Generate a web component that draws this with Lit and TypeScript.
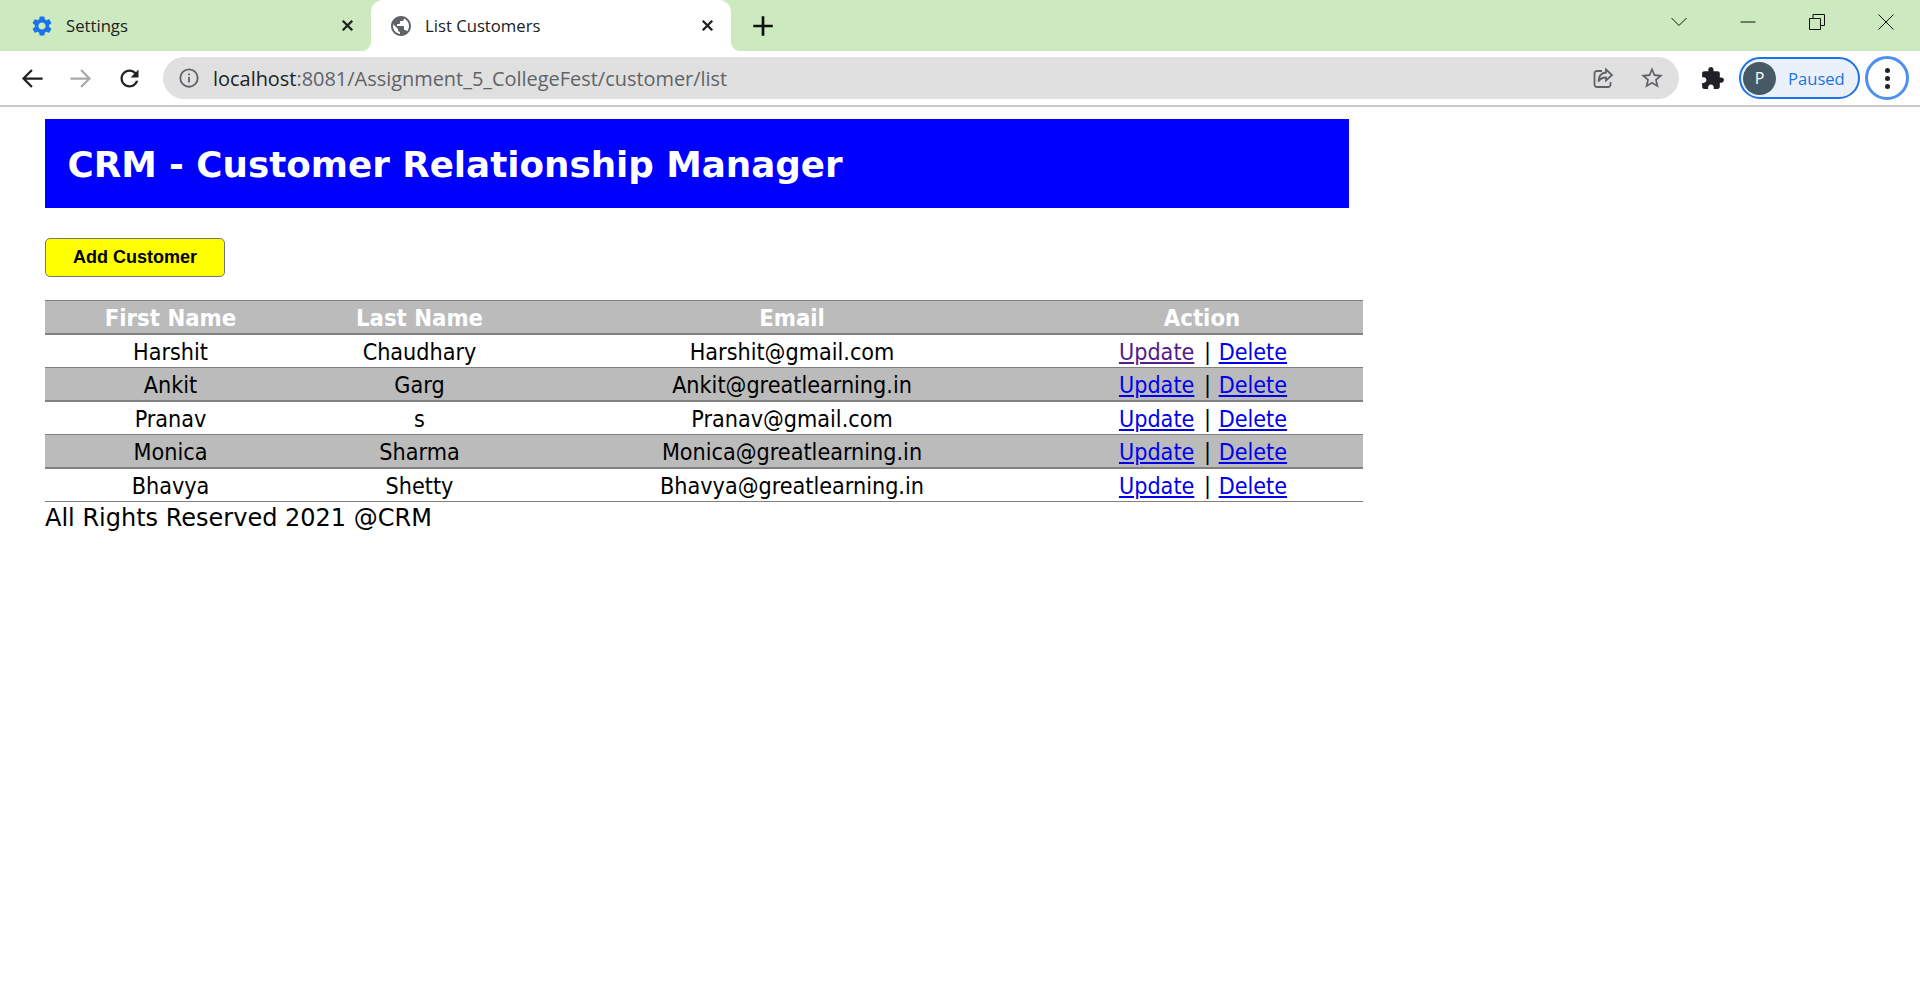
import {LitElement, html, css, svg} from 'lit';
import {customElement} from 'lit/decorators.js';

const customers = [
    {first: 'Harshit', last: 'Chaudhary', email: 'Harshit@gmail.com', visited: true},
    {first: 'Ankit', last: 'Garg', email: 'Ankit@greatlearning.in', visited: false},
    {first: 'Pranav', last: 's', email: 'Pranav@gmail.com', visited: false},
    {first: 'Monica', last: 'Sharma', email: 'Monica@greatlearning.in', visited: false},
    {first: 'Bhavya', last: 'Shetty', email: 'Bhavya@greatlearning.in', visited: false},
];

const icon = (cls: string, body: unknown, box = '0 0 24 24') =>
    html`<svg class=${cls} viewBox=${box}>${body}</svg>`;

const gear = svg`<path d="M19.14 12.94c.04-.3.06-.61.06-.94 0-.32-.02-.64-.07-.94l2.03-1.58c.18-.14.23-.41.12-.61l-1.92-3.32c-.12-.22-.37-.29-.59-.22l-2.39.96c-.5-.38-1.03-.7-1.62-.94l-.36-2.54c-.04-.24-.24-.41-.48-.41h-3.84c-.24 0-.43.17-.47.41l-.36 2.54c-.59.24-1.13.57-1.62.94l-2.39-.96c-.22-.08-.47 0-.59.22L2.74 8.87c-.12.21-.08.47.12.61l2.03 1.58c-.05.3-.09.63-.09.94s.02.64.07.94l-2.03 1.58c-.18.14-.23.41-.12.61l1.92 3.32c.12.22.37.29.59.22l2.39-.96c.5.38 1.03.7 1.62.94l.36 2.54c.05.24.24.41.48.41h3.84c.24 0 .44-.17.47-.41l.36-2.54c.59-.24 1.13-.56 1.62-.94l2.39.96c.22.08.47 0 .59-.22l1.92-3.32c.12-.22.07-.47-.12-.61l-2.01-1.58zM12 15.6c-1.98 0-3.6-1.62-3.6-3.6s1.62-3.6 3.6-3.6 3.6 1.62 3.6 3.6-1.62 3.6-3.6 3.6z"/>`;
const globe = svg`<path d="M12 2C6.48 2 2 6.48 2 12s4.48 10 10 10 10-4.48 10-10S17.52 2 12 2zm-1 17.93c-3.95-.49-7-3.85-7-7.93 0-.62.08-1.21.21-1.79L9 15v1c0 1.1.9 2 2 2v1.93zm6.9-2.54c-.26-.81-1-1.39-1.9-1.39h-1v-3c0-.55-.45-1-1-1H8v-2h2c.55 0 1-.45 1-1V7h2c1.1 0 2-.9 2-2v-.41c2.93 1.19 5 4.06 5 7.41 0 2.08-.8 3.97-2.1 5.39z"/>`;
const close = svg`<path d="M6 6l12 12M18 6L6 18"/>`;
const plus = svg`<path d="M12 3v18M3 12h18"/>`;
const chevron = svg`<path d="M4.500 8l7.500 7.500L19.500 8"/>`;
const minimize = svg`<path d="M4.500 12h15"/>`;
const restore = svg`<path d="M4.500 8.500h11v11h-11zM8 8.500V4.500h11.500v11h-4"/>`;
const winClose = svg`<path d="M4.500 4.500l15 15M19.500 4.500l-15 15"/>`;
const arrowLeft = svg`<path d="M21 12H4M11.500 4.500L4 12l7.500 7.500"/>`;
const arrowRight = svg`<path d="M3 12h17M12.500 4.500L20 12l-7.500 7.500"/>`;
const reload = svg`<path d="M17.650 6.350C16.200 4.900 14.210 4 12 4c-4.420 0-7.990 3.580-7.990 8s3.570 8 7.990 8c3.730 0 6.840-2.550 7.730-6h-2.080c-.82 2.330-3.040 4-5.650 4-3.310 0-6-2.690-6-6s2.690-6 6-6c1.660 0 3.140.69 4.220 1.780L13 11h7V4l-2.350 2.350z"/>`;
const info = svg`<circle cx="12" cy="12" r="9.500" fill="none" stroke="currentColor" stroke-width="2"/><path d="M11 11h2v6h-2zM11 7h2v2h-2z"/>`;
const share = svg`<path d="M11 5H6a2.500 2.500 0 0 0-2.500 2.500v11A2.500 2.500 0 0 0 6 21h11a2.500 2.500 0 0 0 2.500-2.500V16"/><path d="M15 3.500l6 5.500-6 5.500V11.500c-3.500 0-6 1-7.500 4 0-5 2.500-8.500 7.500-9z"/>`;
const star = svg`<path d="M22 9.240l-7.190-.62L12 2 9.190 8.630 2 9.240l5.460 4.730L5.820 21 12 17.270 18.180 21l-1.630-7.030L22 9.240zM12 15.400l-3.760 2.270 1-4.280-3.320-2.880 4.380-.38L12 6.100l1.710 4.040 4.380.38-3.320 2.880 1 4.280L12 15.400z"/>`;
const puzzle = svg`<path d="M20.500 11H19V7c0-1.100-.9-2-2-2h-4V3.500C13 2.120 11.880 1 10.500 1S8 2.120 8 3.500V5H4c-1.100 0-1.990.9-1.990 2v3.800H3.500c1.490 0 2.700 1.210 2.700 2.700s-1.210 2.700-2.700 2.700H2V20c0 1.100.9 2 2 2h3.800v-1.500c0-1.490 1.210-2.700 2.700-2.700 1.490 0 2.700 1.210 2.700 2.700V22H17c1.100 0 2-.9 2-2v-4h1.500c1.380 0 2.500-1.120 2.500-2.500S21.880 11 20.500 11z"/>`;

@customElement('app-root')
export class AppRoot extends LitElement {
    static styles = css`
        :host {
            display: block;
            min-height: 1002px;
            background: #fff;
            color: #000;
            font-family: "DejaVu Sans", sans-serif;
        }

        .tabstrip {
            display: flex;
            height: 51px;
            background: #cce9bf;
            font-family: "Open Sans", sans-serif;
            font-size: 16.700px;
            color: #202124;
        }

        .tab {
            position: relative;
            display: flex;
            align-items: center;
            box-sizing: border-box;
            width: 371px;
            height: 51px;
            padding-left: 30px;
        }

        .tab.active {
            width: 360px;
            padding-left: 18px;
            background: #fff;
            border-radius: 12px 12px 0 0;
        }

        .tab.active::before,
        .tab.active::after {
            position: absolute;
            bottom: 0;
            width: 10px;
            height: 10px;
            content: "";
        }

        .tab.active::before {
            left: -10px;
            background: radial-gradient(circle at 0 0, transparent 10px, #fff 10.500px);
        }

        .tab.active::after {
            right: -10px;
            background: radial-gradient(circle at 100% 0, transparent 10px, #fff 10.500px);
        }

        .tab-icon {
            width: 24px;
            height: 24px;
            fill: #5f6368;
        }

        .tab-icon.blue {
            fill: #1a73e8;
        }

        .tab-title {
            flex: 1;
            margin-left: 12px;
        }

        .tab-close {
            width: 19px;
            height: 19px;
            margin-right: 14px;
            fill: none;
            stroke: #202124;
            stroke-width: 3;
        }

        .new-tab {
            align-self: center;
            width: 26px;
            height: 26px;
            margin-left: 19px;
            fill: none;
            stroke: #111;
            stroke-width: 2.500;
        }

        .win {
            display: flex;
            margin-left: auto;
        }

        .win-btn {
            display: flex;
            align-items: center;
            justify-content: center;
            width: 69px;
            height: 44px;
        }

        .win-icon {
            width: 24px;
            height: 24px;
            fill: none;
            stroke: #111;
            stroke-width: 1;
        }

        .toolbar {
            display: flex;
            align-items: center;
            box-sizing: border-box;
            height: 56px;
            padding: 0 0 0 8px;
            background: #fff;
            border-bottom: 2px solid #c9c9c9;
        }

        .nav {
            display: flex;
            align-items: center;
            justify-content: center;
            width: 48.500px;
        }

        .nav-icon {
            width: 27px;
            height: 27px;
            fill: none;
            stroke: #202124;
            stroke-width: 2;
        }

        .nav-icon.off {
            stroke: #a8a9ab;
        }

        .nav-icon.solid {
            fill: #202124;
            stroke: none;
        }

        .omnibox {
            display: flex;
            align-items: center;
            box-sizing: border-box;
            width: 1516px;
            height: 42px;
            margin-left: 9.500px;
            padding: 0 14px 0 15px;
            background: #e0e0e0;
            border-radius: 21px;
            font-family: "Open Sans", sans-serif;
            font-size: 19.930px;
            color: #5f6368;
        }

        .info {
            width: 22px;
            height: 22px;
            fill: #5f6368;
        }

        .url {
            flex: 1;
            margin-left: 13px;
        }

        .url b {
            font-weight: 400;
            color: #202124;
        }

        .share {
            width: 24px;
            height: 24px;
            fill: none;
            stroke: #5f6368;
            stroke-width: 1.800;
        }

        .star {
            width: 26px;
            height: 26px;
            margin-left: 24px;
            fill: #5f6368;
        }

        .puzzle {
            width: 25px;
            height: 25px;
            margin-left: 21px;
            fill: #202124;
        }

        .profile {
            display: flex;
            align-items: center;
            box-sizing: border-box;
            width: 121px;
            height: 42px;
            margin-left: 14px;
            padding-left: 2px;
            background: #ebf1fb;
            border: 2px solid #1a73e8;
            border-radius: 21px;
            font-family: "Open Sans", sans-serif;
            font-size: 16.600px;
            color: #1a73e8;
        }

        .avatar {
            display: flex;
            align-items: center;
            justify-content: center;
            width: 33px;
            height: 33px;
            margin-right: 12px;
            background: #455a64;
            border-radius: 50%;
            color: #fff;
            font-size: 16px;
        }

        .menu {
            display: flex;
            flex-direction: column;
            align-items: center;
            justify-content: center;
            gap: 3px;
            box-sizing: border-box;
            width: 44px;
            height: 44px;
            margin-left: 5px;
            border: 3px solid #4d90f0;
            border-radius: 50%;
        }

        .menu i {
            width: 5px;
            height: 5px;
            background: #202124;
            border-radius: 50%;
        }

        .page {
            padding: 12px 0 0 45px;
        }

        .banner {
            display: flex;
            align-items: center;
            box-sizing: border-box;
            width: 1304px;
            height: 89px;
            padding: 2px 0 0 22.500px;
            background: #00f;
            color: #fff;
            font-size: 35.700px;
            font-weight: 700;
        }

        .add {
            display: block;
            box-sizing: border-box;
            width: 180px;
            height: 39px;
            margin: 30px 0 23px;
            padding: 0;
            background: #ff0;
            border: 1px solid #767676;
            border-radius: 5px;
            font-family: "Liberation Sans", sans-serif;
            font-size: 18px;
            font-weight: 700;
            color: #000;
        }

        table {
            width: 1318px;
            table-layout: fixed;
            border-spacing: 0;
            border-collapse: separate;
            font-family: "DejaVu Sans Condensed", "DejaVu Sans", sans-serif;
            font-size: 23.150px;
            text-align: center;
        }

        th,
        td {
            box-sizing: border-box;
            padding: 3px 0 0;
            line-height: 1;
        }

        th {
            height: 35px;
            padding-top: 4px;
            background: #bbb;
            border-top: 1px solid #808080;
            border-bottom: 2px solid #808080;
            color: #fff;
            font-size: 23.700px;
            font-weight: 700;
        }

        td {
            height: 33px;
            border-bottom: 1px solid #808080;
        }

        tr.alt td {
            height: 34px;
            background: #bbb;
            border-bottom-width: 2px;
        }

        td.actions {
            padding-left: 2px;
        }

        a {
            color: #00e;
        }

        a.visited {
            color: #551a8b;
        }

        .sep {
            margin: 0 1px 0 3px;
        }

        .w1 { width: 251px; }
        .w2 { width: 247px; }
        .w3 { width: 498px; }

        .footer {
            padding-top: 1px;
            font-size: 24px;
            line-height: 30px;
        }
    `;

    render() {
        return html`
            <div class="tabstrip">
                <div class="tab">
                    ${icon('tab-icon blue', gear)}
                    <span class="tab-title">Settings</span>
                    ${icon('tab-close', close)}
                </div>
                <div class="tab active">
                    ${icon('tab-icon', globe)}
                    <span class="tab-title">List Customers</span>
                    ${icon('tab-close', close)}
                </div>
                ${icon('new-tab', plus)}
                <div class="win">
                    <div class="win-btn">${icon('win-icon', chevron)}</div>
                    <div class="win-btn">${icon('win-icon', minimize)}</div>
                    <div class="win-btn">${icon('win-icon', restore)}</div>
                    <div class="win-btn">${icon('win-icon', winClose)}</div>
                </div>
            </div>
            <div class="toolbar">
                <div class="nav">${icon('nav-icon', arrowLeft)}</div>
                <div class="nav">${icon('nav-icon off', arrowRight)}</div>
                <div class="nav">${icon('nav-icon solid', reload)}</div>
                <div class="omnibox">
                    ${icon('info', info)}
                    <span class="url"><b>localhost</b>:8081/Assignment_5_CollegeFest/customer/list</span>
                    ${icon('share', share)}
                    ${icon('star', star)}
                </div>
                ${icon('puzzle', puzzle)}
                <div class="profile">
                    <span class="avatar">P</span>
                    <span>Paused</span>
                </div>
                <div class="menu"><i></i><i></i><i></i></div>
            </div>
            <div class="page">
                <div class="banner">CRM - Customer Relationship Manager</div>
                <button class="add">Add Customer</button>
                <table>
                    <thead>
                        <tr>
                            <th class="w1">First Name</th>
                            <th class="w2">Last Name</th>
                            <th class="w3">Email</th>
                            <th>Action</th>
                        </tr>
                    </thead>
                    <tbody>
                        ${customers.map((c, i) => html`
                            <tr class=${i % 2 ? 'alt' : ''}>
                                <td>${c.first}</td>
                                <td>${c.last}</td>
                                <td>${c.email}</td>
                                <td class="actions">
                                    <a class=${c.visited ? 'visited' : ''} href="#">Update</a>
                                    <span class="sep">|</span>
                                    <a href="#">Delete</a>
                                </td>
                            </tr>
                        `)}
                    </tbody>
                </table>
                <div class="footer">All Rights Reserved 2021 @CRM</div>
            </div>
        `;
    }
}
